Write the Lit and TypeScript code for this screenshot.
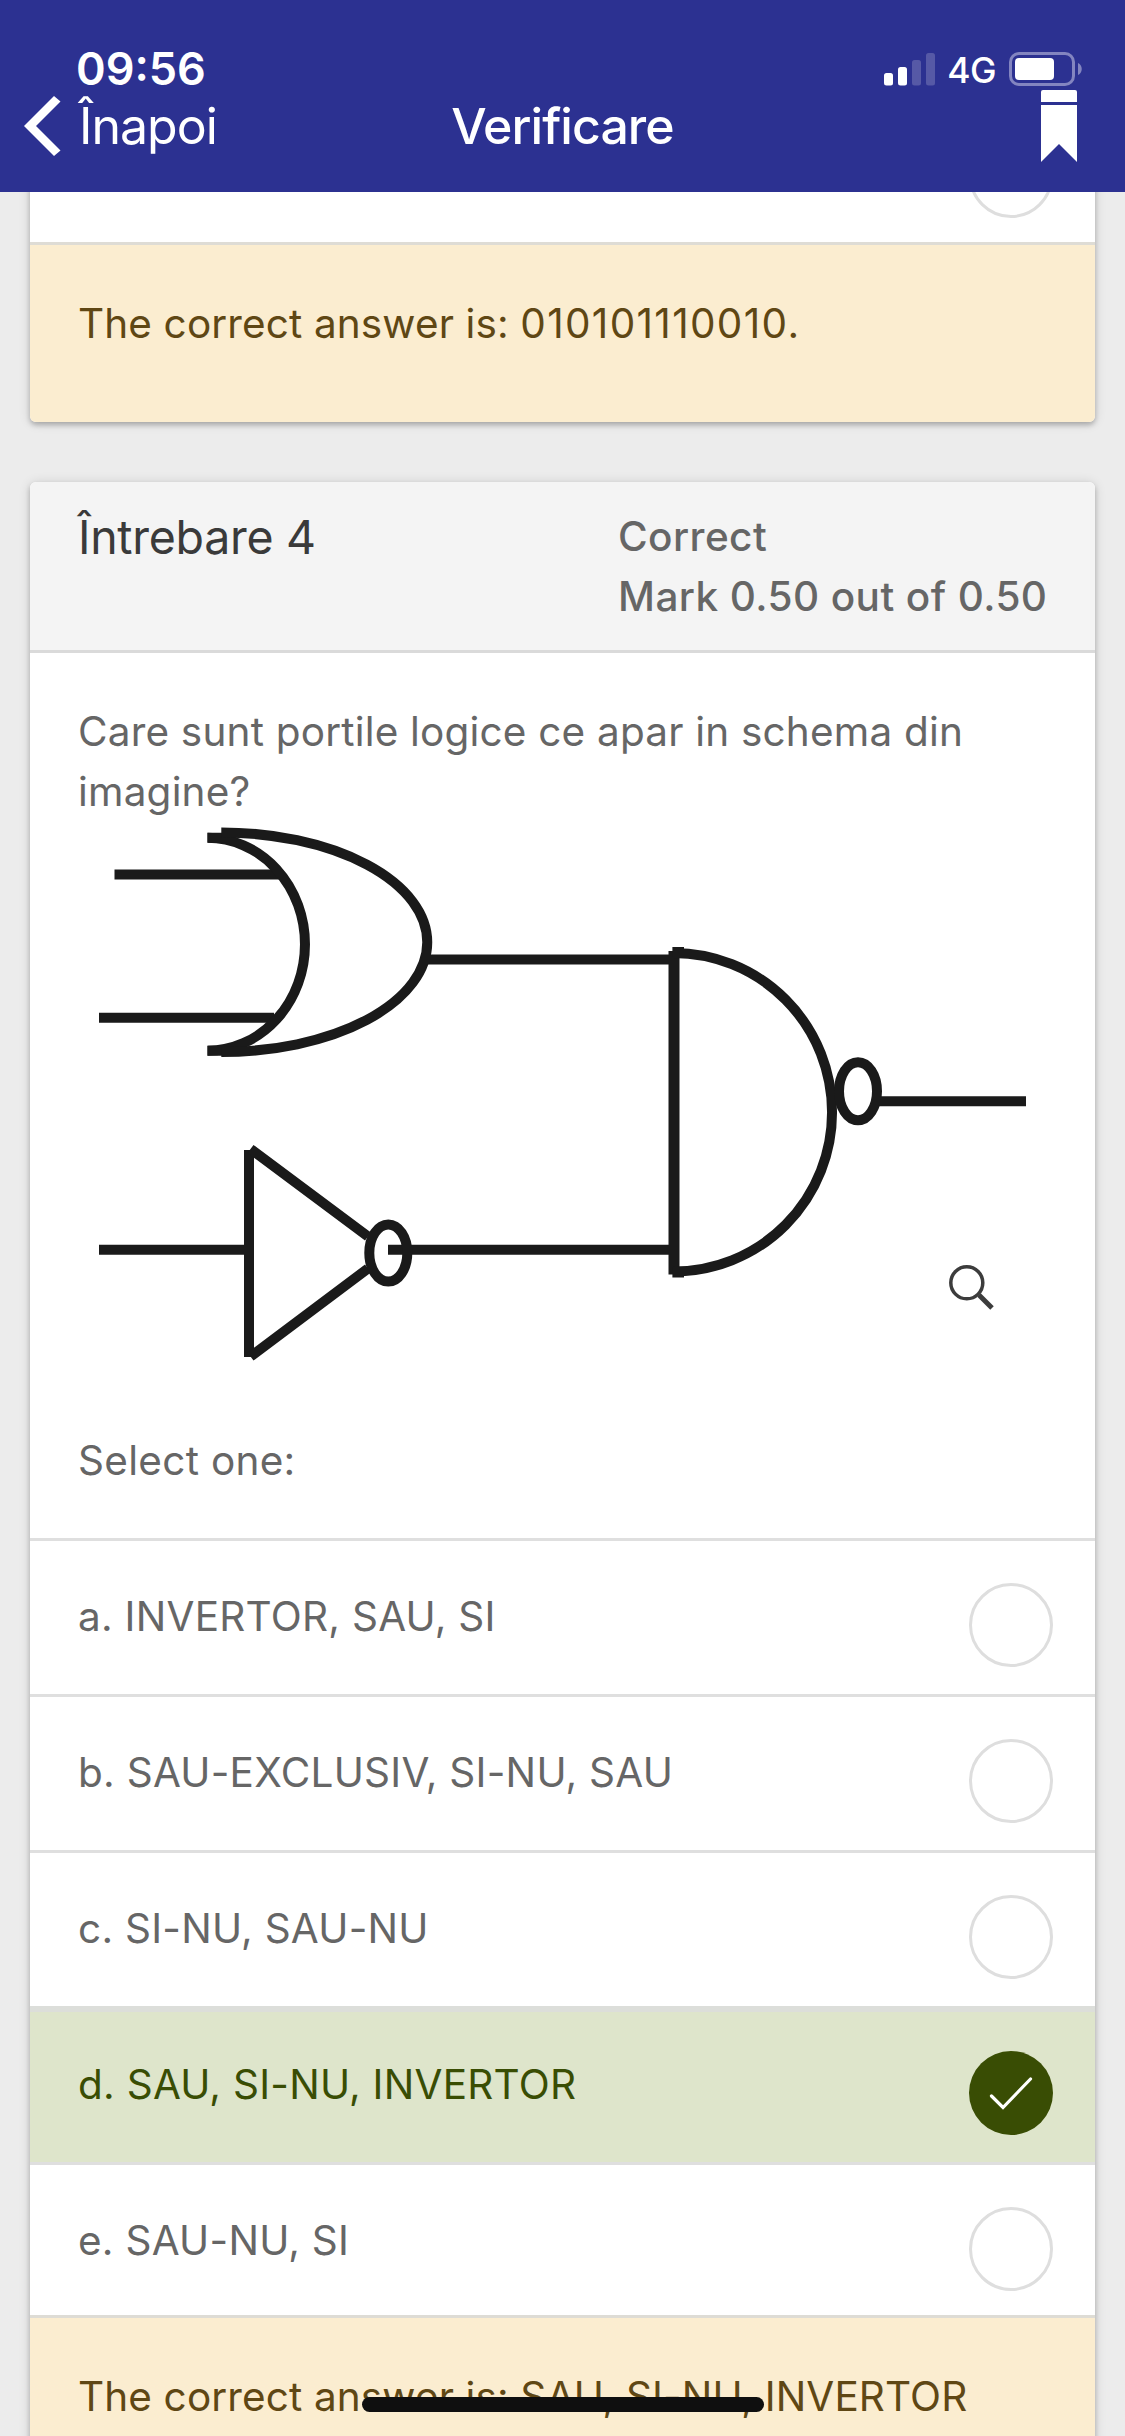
import { LitElement, html, css, svg, nothing } from "lit";
import { customElement, property } from "lit/decorators.js";
import { classMap } from "lit/directives/class-map.js";

interface Answer {
  text: string;
  correct?: boolean;
}

const ANSWERS: Answer[] = [
  { text: "a. INVERTOR, SAU, SI" },
  { text: "b. SAU-EXCLUSIV, SI-NU, SAU" },
  { text: "c. SI-NU, SAU-NU" },
  { text: "d. SAU, SI-NU, INVERTOR", correct: true },
  { text: "e. SAU-NU, SI" },
];

/** Device status line: clock, signal, network and battery. */
@customElement("status-bar")
export class StatusBar extends LitElement {
  static styles = css`
    :host {
      display: flex;
      align-items: center;
      height: 42px;
      padding: 48px 43px 0 76px;
      color: #fff;
    }
    .time {
      flex: 1;
      font-size: 45px;
      font-weight: 580;
      line-height: 42px;
      letter-spacing: 0;
    }
    .network {
      margin: 3px 13px 0 11px;
      font-size: 35.5px;
      font-weight: 450;
      line-height: 42px;
      letter-spacing: -0.5px;
    }
    svg {
      display: block;
    }
  `;
  render() {
    return html`
      <span class="time">09:56</span>
      <svg width="52" height="34" viewBox="0 0 52 34" fill="#fff">
        <rect x="0" y="21" width="9" height="12.5" rx="2.5" />
        <rect x="14" y="15" width="9" height="18.5" rx="2.5" />
        <rect x="28" y="8" width="9" height="25.5" rx="2.5" fill="#5659a6" />
        <rect x="42" y="1" width="9" height="32.5" rx="2.5" fill="#5659a6" />
      </svg>
      <span class="network">4G</span>
      <svg width="73" height="34" viewBox="0 0 73 34">
        <rect x="1.5" y="1.5" width="63" height="31" rx="8.5" fill="none" stroke="#8385c0" stroke-width="3" />
        <rect x="6" y="6" width="39" height="22" rx="4" fill="#fff" />
        <path d="M69 11c5 2 5 10 0 12z" fill="#8385c0" />
      </svg>
    `;
  }
}

/** Navigation row with back button, title and bookmark. */
@customElement("nav-bar")
export class NavBar extends LitElement {
  static styles = css`
    :host {
      display: grid;
      grid-template-columns: 1fr auto 1fr;
      align-items: center;
      height: 72px;
      padding: 0 24px;
      color: #fff;
      font-size: 50px;
      line-height: 72px;
    }
    .back {
      display: flex;
      align-items: center;
      gap: 18px;
      letter-spacing: -1px;
    }
    .title {
      font-weight: 550;
      letter-spacing: -0.95px;
    }
    .bookmark {
      justify-self: end;
      margin-right: 24px;
    }
    svg {
      display: block;
    }
  `;
  render() {
    return html`
      <span class="back">
        <svg width="37" height="64" viewBox="0 0 37 64" fill="#fff">
          <path d="M0 32 30 2l6.500 5.500L12 32l24.500 24.500L30 62z" />
        </svg>
        Înapoi
      </span>
      <span class="title">Verificare</span>
      <svg class="bookmark" width="36" height="72" viewBox="0 0 36 72" fill="#fff">
        <path d="M2 0h32a2 2 0 0 1 2 2v10H0V2a2 2 0 0 1 2-2z" />
        <path d="M0 15h36v57L18 54 0 72z" />
      </svg>
    `;
  }
}

/** Round selection mark; filled with a tick when checked. */
@customElement("radio-mark")
export class RadioMark extends LitElement {
  static styles = css`
    :host {
      display: block;
      width: 84px;
      height: 84px;
    }
    svg {
      display: block;
    }
  `;
  @property({ type: Boolean }) checked = false;
  render() {
    return html`
      <svg width="84" height="84" viewBox="0 0 84 84" fill="none">
        ${this.checked
          ? svg`<circle cx="42" cy="42" r="42" fill="#394d04" />
              <path d="M22.500 45 34 56.500 61.500 28" stroke="#fff" stroke-width="3.200" stroke-linecap="round" />`
          : svg`<circle cx="42" cy="42" r="40.500" stroke="#dedede" stroke-width="3" />`}
      </svg>
    `;
  }
}

/** Circuit figure: an OR gate and an inverter feeding a NAND gate. */
@customElement("logic-diagram")
export class LogicDiagram extends LitElement {
  static styles = css`
    :host,
    svg {
      display: block;
    }
  `;
  render() {
    return html`
      <svg width="975" height="579" viewBox="80 821 975 579" fill="none">
        <g stroke="#1a1a1a" stroke-width="10">
          <path d="M114.500 874.500H280M99 1017.700H274" />
          <path d="M207.500 837.800A97.500 106.400 0 0 1 207.500 1050.700" />
          <path d="M207.500 837.800H228M207.500 1050.700H228" />
          <path d="M221.300 832.500A206 109.700 0 0 1 221.300 1052" />
          <path d="M427 959.500H670" />
          <path d="M99 1249.700H249M388 1249.700H670" />
          <path d="M249 1150V1357" />
          <path d="M250.500 1149 368 1236.500M250.500 1356.500 368 1268.500" />
          <ellipse cx="388.300" cy="1253" rx="19" ry="28.500" />
          <path d="M674 951V1274.500" stroke-width="11" />
          <path d="M672.400 952H684M672.400 1272.500H684" />
          <path d="M673.500 953A158.500 159.200 0 0 1 673.500 1271.500" />
          <ellipse cx="858" cy="1091.300" rx="19" ry="29" />
          <path d="M879 1101.200H1026" />
        </g>
        <g stroke="#3c3c3c">
          <circle cx="966.800" cy="1282.800" r="16" stroke-width="3.500" />
          <path d="M979 1295 992 1308" stroke-width="5" />
        </g>
      </svg>
    `;
  }
}

@customElement("answer-row")
export class AnswerRow extends LitElement {
  static styles = css`
    :host {
      display: block;
    }
    .row {
      display: flex;
      justify-content: space-between;
      align-items: flex-start;
      box-sizing: border-box;
      height: 156px;
      border-top: 3px solid #dfdfdf;
      padding: 42px 42px 0 48px;
      background: #fff;
      color: #666;
      letter-spacing: 0.26px;
    }
    .correct {
      background: #dee5cb;
      color: #394d04;
      border-top-width: 6px;
      border-top-color: #dcdeda;
      padding-top: 39px;
    }
    .text {
      margin-top: 4px;
    }
  `;
  @property() text = "";
  @property({ type: Boolean }) correct = false;
  render() {
    return html`
      <div class=${classMap({ row: true, correct: this.correct })}>
        <span class="text">${this.text || nothing}</span>
        <radio-mark ?checked=${this.correct}></radio-mark>
      </div>
    `;
  }
}

@customElement("app-root")
export class AppRoot extends LitElement {
  static styles = css`
    :host {
      display: flex;
      flex-direction: column;
      position: relative;
      height: 2436px;
      overflow: hidden;
      background: #ececec;
      font-family: Inter, "Liberation Sans", sans-serif;
      font-size: 40.5px;
      line-height: 60px;
      color: #666;
      white-space: nowrap;
    }
    header {
      flex: none;
      height: 192px;
      background: #2c3191;
    }
    main {
      flex: 1;
      display: flex;
      flex-direction: column;
      gap: 60px;
      min-height: 0;
      padding: 0 30px;
      overflow: hidden;
    }
    .card {
      flex: none;
      border-radius: 6px;
      overflow: hidden;
      background: #fff;
      box-shadow: 0 3px 5px rgba(0, 0, 0, 0.22), 0 1px 12px rgba(0, 0, 0, 0.14);
    }
    .previous {
      margin-top: -103px;
    }
    .feedback {
      border-top: 3px solid #dedcd5;
      padding: 49px 48px 68px;
      background: #fbedd0;
      color: #5f4714;
      letter-spacing: 0.13px;
    }
    .code {
      letter-spacing: 1.33px;
    }
    .head {
      display: grid;
      grid-template-columns: 540px 1fr;
      height: 168px;
      box-sizing: content-box;
      border-bottom: 3px solid #dadada;
      padding-left: 48px;
      background: #f4f4f4;
    }
    .number {
      padding-top: 25px;
      font-size: 46.5px;
      letter-spacing: -0.3px;
      color: #3a3a3a;
    }
    .grade {
      display: flex;
      flex-direction: column;
      padding-top: 25px;
      font-weight: 500;
      letter-spacing: 0.42px;
    }
    .question {
      padding: 49px 40px 47px 48px;
    }
    .prompt {
      letter-spacing: 0.19px;
    }
    logic-diagram {
      margin: -1px 0 31px 2px;
    }
    .select {
      letter-spacing: 0.3px;
    }
    answer-row:last-of-type {
      margin-bottom: -3px;
    }
    .home {
      position: absolute;
      left: 362px;
      top: 2397px;
      width: 402px;
      height: 15px;
      border-radius: 8px;
      background: #0f0f0f;
    }
  `;
  render() {
    return html`
      <header>
        <status-bar></status-bar>
        <nav-bar></nav-bar>
      </header>
      <main>
        <section class="card previous">
          <answer-row></answer-row>
          <div class="feedback">The correct answer is: <span class="code">010101110010.</span></div>
        </section>
        <section class="card">
          <div class="head">
            <div class="number">Întrebare 4</div>
            <div class="grade"><span>Correct</span><span>Mark 0.50 out of 0.50</span></div>
          </div>
          <div class="question">
            <div class="prompt">Care sunt portile logice ce apar in schema din<br />imagine?</div>
            <logic-diagram></logic-diagram>
            <div class="select">Select one:</div>
          </div>
          ${ANSWERS.map((a) => html`<answer-row .text=${a.text} ?correct=${a.correct}></answer-row>`)}
          <div class="feedback">The correct answer is: SAU, SI-NU, INVERTOR</div>
        </section>
      </main>
      <div class="home"></div>
    `;
  }
}
